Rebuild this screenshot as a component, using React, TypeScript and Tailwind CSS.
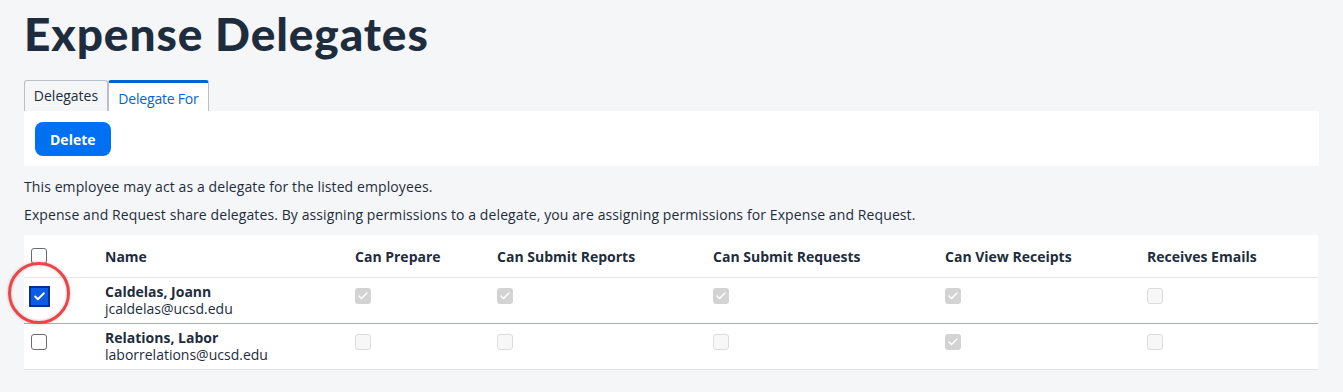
import { Check } from 'lucide-react'

type Row = {
  name: string
  email: string
  selected: boolean
  perms: boolean[]
}

const rows: Row[] = [
  { name: 'Caldelas, Joann', email: 'jcaldelas@ucsd.edu', selected: true, perms: [true, true, true, true, false] },
  { name: 'Relations, Labor', email: 'laborrelations@ucsd.edu', selected: false, perms: [false, false, false, true, false] },
]

const columns = ['Can Prepare', 'Can Submit Reports', 'Can Submit Requests', 'Can View Receipts', 'Receives Emails']
const colWidths = ['w-[142px]', 'w-[216px]', 'w-[232px]', 'w-[202px]', 'flex-1']

function DisabledBox({ checked }: { checked: boolean }) {
  return checked ? (
    <div className="w-4 h-4 rounded-[3px] bg-[#d3d3d3] flex items-center justify-center">
      <Check className="w-3 h-3 text-white" strokeWidth={3} />
    </div>
  ) : (
    <div className="w-4 h-4 rounded-[3px] bg-[#f7f7f7] border border-[#dcdcdc]" />
  )
}

export default function App() {
  return (
    <div className="min-h-screen bg-[#f5f6f7] px-6 text-[#1d2d3e]" style={{ fontFamily: '"Open Sans", "Liberation Sans", sans-serif' }}>
      <h1 className="pt-[8px] text-[46px] font-black leading-[52px] tracking-[0.9px]" style={{ fontFamily: 'Lato, sans-serif' }}>
        Expense Delegates
      </h1>

      {/* tabs */}
      <div className="mt-[20px] flex items-end">
        <div className="h-[31px] w-[84px] border border-b-0 border-[#b9c0c7] rounded-t-[3px] bg-[#f5f6f7] flex items-center justify-center pb-[2px] text-[14px] text-[#1d2d3e]">
          Delegates
        </div>
        <div className="h-[31px] w-[101px] border-x border-[#b9c0c7] border-t-[3px] border-t-[#0064d9] rounded-t-[3px] bg-white flex items-center justify-center pt-[3px] text-[14px] tracking-[-0.2px] text-[#0064d9]">
          Delegate For
        </div>
      </div>

      <div className="bg-white h-[55px] pl-[11px] pt-[11px]">
        <button type="button" className="h-[34px] px-[15px] rounded-[8px] bg-[#0070f2] text-white text-[14px] font-bold">
          Delete
        </button>
      </div>

      <p className="mt-[12px] text-[14px] leading-[18px] tracking-[0.1px]">This employee may act as a delegate for the listed employees.</p>
      <p className="mt-[10px] text-[14px] leading-[18px] tracking-[0.1px]">
        Expense and Request share delegates. By assigning permissions to a delegate, you are assigning permissions for Expense and Request.
      </p>

      {/* table */}
      <div className="mt-[11px] w-[1294px] bg-white">
        <div className="h-[43px] flex items-center border-b border-[#e5e5e5]">
          <div className="w-[81px] pl-[7px] flex">
            <div className="w-4 h-4 rounded-[3px] border border-[#6a6d70] bg-white" />
          </div>
          <div className="w-[250px] text-[14px] font-bold">Name</div>
          {columns.map((c, i) => (
            <div key={c} className={`${colWidths[i]} text-[14px] font-bold`}>{c}</div>
          ))}
        </div>
        {rows.map((r, idx) => (
          <div
            key={r.email}
            className={`h-[46px] flex items-start pt-[10px] border-b ${idx === 0 ? 'border-[#a9b0b7]' : 'border-[#e5e5e5]'}`}
          >
            <div className="w-[81px] pl-[5px] flex relative">
              {r.selected ? (
                <>
                  <div className="w-[21px] h-[21px] -mt-[2px] border-2 border-[#0b2e8f] bg-[#0a5ce6] flex items-center justify-center">
                    <Check className="w-[13px] h-[13px] text-white" strokeWidth={3.5} />
                  </div>
                  <div className="absolute -left-[16px] -top-[26px] w-[62px] h-[62px] rounded-full border-[3px] border-[#ec4448] shadow-[inset_0_0_3px_rgba(0,0,0,0.25),0_0_3px_rgba(0,0,0,0.25)]" />
                </>
              ) : (
                <div className="w-4 h-4 ml-[2px] rounded-[3px] border border-[#6a6d70] bg-white" />
              )}
            </div>
            <div className="w-[250px] -mt-[5px] leading-[17px]">
              <div className="text-[14px] font-bold">{r.name}</div>
              <div className="text-[14px] text-[#1d2d3e]">{r.email}</div>
            </div>
            {r.perms.map((p, i) => (
              <div key={i} className={colWidths[i]}>
                <DisabledBox checked={p} />
              </div>
            ))}
          </div>
        ))}
      </div>
    </div>
  )
}
